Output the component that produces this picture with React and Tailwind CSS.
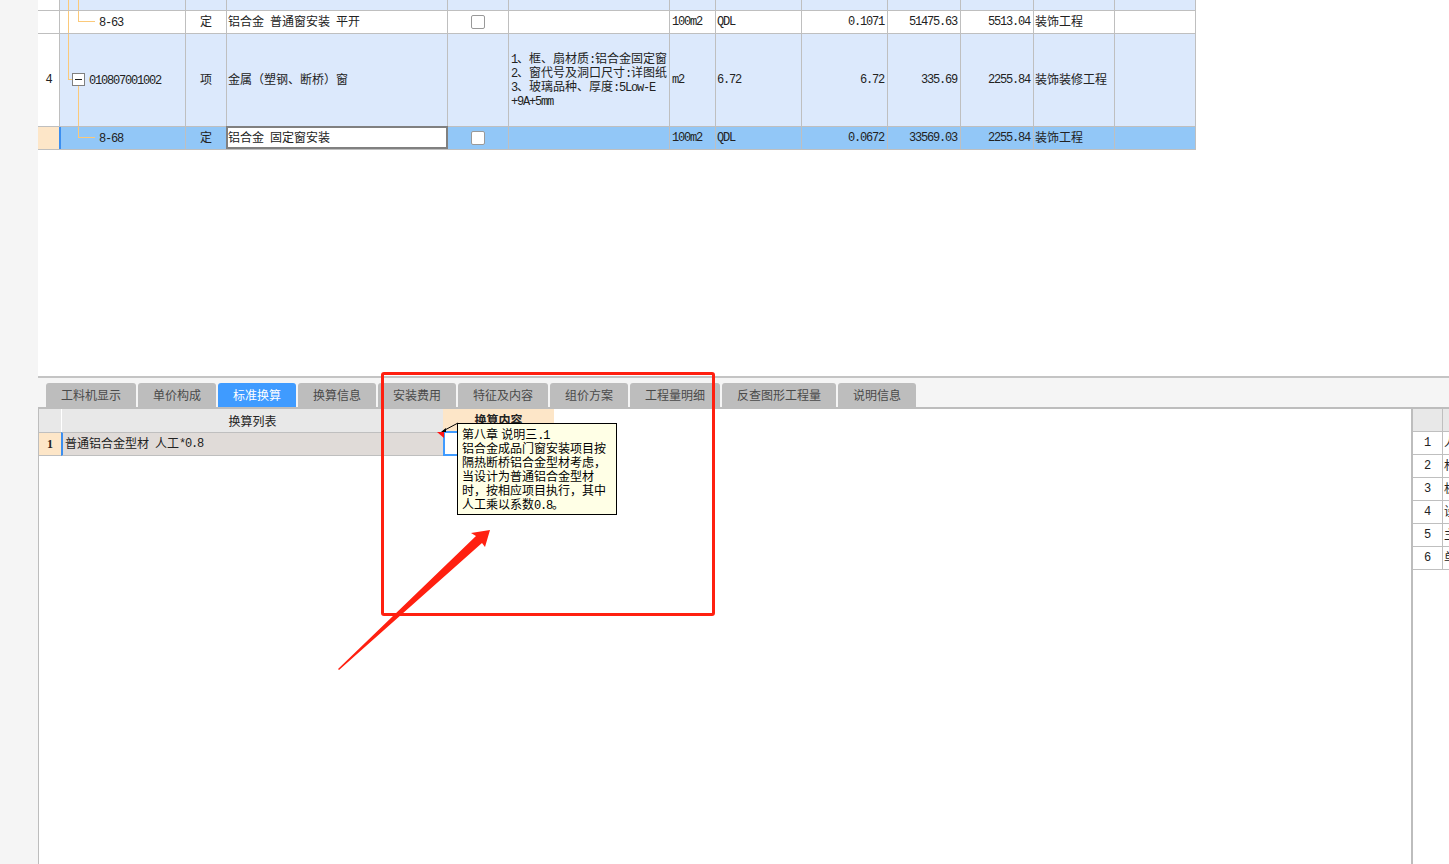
import React from "react";

const T = ({ children }) => (
  <>
    {String(children)
      .split(/([\x20-\x7e]+)/)
      .map((p, i) =>
        /^[\x20-\x7e]+$/.test(p) ? (
          <span key={i} className="font-['Liberation_Mono',monospace] text-[12px] leading-[10px] tracking-[-1.2px] whitespace-pre">
            {p}
          </span>
        ) : (
          p
        )
      )}
  </>
);

const ROW = "grid grid-cols-[22px_126px_41px_221px_61px_161px_46px_86px_86px_73px_73px_81px_81px] w-[1158px] border-b border-[#bfbfbf]";
const C = "border-r border-[#bfbfbf] flex items-center min-w-0 overflow-hidden";

const Check = () => (
  <span className="w-[14px] h-[14px] bg-white border border-[#999999] rounded-[2px] block" />
);

const DataRow = ({ bg, height, num, numBg, code, codeExtra, type, name, feature, unit, expr, qty, price, total, major, active, noCheck }) => (
  <div className={`${ROW} ${height} ${bg}`}>
    <div className={`${C} justify-center ${numBg}`}><T>{num}</T></div>
    <div className={`${C} relative ${active ? "border-l-2 border-l-[#3b8ef0] -ml-px" : ""}`}>{codeExtra}{code}</div>
    <div className={`${C} justify-center`}>{type}</div>
    {active ? (
      <div className="border-2 border-[#808080] bg-white flex items-center -mt-px -ml-px"><T>{name}</T></div>
    ) : (
      <div className={`${C} pl-px`}><T>{name}</T></div>
    )}
    <div className={`${C} justify-center`}>{noCheck ? null : <Check />}</div>
    <div className={`${C} pl-[2px] leading-[14px]`}>{feature}</div>
    <div className={`${C} pl-[2px]`}><T>{unit}</T></div>
    <div className={`${C} pl-px`}><T>{expr}</T></div>
    <div className={`${C} justify-end pr-[3px]`}><T>{qty}</T></div>
    <div className={`${C} justify-end pr-[3px]`}><T>{price}</T></div>
    <div className={`${C} justify-end pr-[3px]`}><T>{total}</T></div>
    <div className={`${C} pl-px`}>{major}</div>
    <div className={C} />
  </div>
);

const Line = ({ className }) => <span className={`absolute bg-[#fbc97a] ${className}`} />;

const tabs = [
  ["工料机显示", "w-[90px]"],
  ["单价构成", "w-[78px]"],
  ["标准换算", "w-[78px]"],
  ["换算信息", "w-[78px]"],
  ["安装费用", "w-[78px]"],
  ["特征及内容", "w-[90px]"],
  ["组价方案", "w-[78px]"],
  ["工程量明细", "w-[90px]"],
  ["反查图形工程量", "w-[114px]"],
  ["说明信息", "w-[78px]"],
];

const sideRows = ["人", "材", "机", "设", "主", "单"];

export default function App() {
  return (
    <div className="relative w-[1449px] h-[864px] overflow-hidden flex bg-white text-[12px] leading-[14px] text-[#222222] font-['Liberation_Sans','Noto_Sans_CJK_SC',sans-serif]">
      <div className="w-[38px] shrink-0 bg-[#f5f5f5]" />
      <div className="flex-1 flex flex-col min-w-0">
        <div className="h-[376px] shrink-0">
          <div className={`${ROW} h-[11px] bg-[#dce9fc]`}>
            <div className={`${C} bg-white`} />
            <div className={`${C} relative`}>
              <Line className="left-[8px] top-0 w-px h-[11px]" />
              <Line className="left-[18px] top-0 w-px h-[11px]" />
            </div>
            {Array.from({ length: 11 }).map((_, i) => (
              <div key={i} className={C} />
            ))}
          </div>
          <DataRow
            bg="bg-white"
            height="h-[23px]"
            num=""
            numBg="bg-white"
            code={<span className="ml-[39px]"><T>8-63</T></span>}
            codeExtra={
              <>
                <Line className="left-[8px] top-0 w-px h-[23px]" />
                <Line className="left-[18px] top-0 w-px h-[10px]" />
                <Line className="left-[18px] top-[10px] w-[17px] h-px" />
              </>
            }
            type="定"
            name="铝合金 普通窗安装 平开"
            unit="100m2"
            expr="QDL"
            qty="0.1071"
            price="51475.63"
            total="5513.04"
            major="装饰工程"
          />
          <DataRow
            bg="bg-[#dce9fc]"
            height="h-[93px]"
            num="4"
            numBg="bg-white"
            noCheck
            code={<span className="ml-[29px]"><T>010807001002</T></span>}
            codeExtra={
              <>
                <Line className="left-[8px] top-0 w-px h-[46px]" />
                <Line className="left-[8px] top-[45px] w-[5px] h-px" />
                <Line className="left-[18px] top-[51px] w-px h-[42px]" />
                <span className="absolute left-[12px] top-[39px] w-[13px] h-[13px] border border-[#808080] bg-white flex items-center justify-center">
                  <span className="w-[7px] h-px bg-[#222222]" />
                </span>
              </>
            }
            type="项"
            name="金属（塑钢、断桥）窗"
            feature={
              <div>
                <div><T>1</T>、框、扇材质<T>:</T>铝合金固定窗</div>
                <div><T>2</T>、窗代号及洞口尺寸<T>:</T>详图纸</div>
                <div><T>3</T>、玻璃品种、厚度<T>:5Low-E</T></div>
                <div><T>+9A+5mm</T></div>
              </div>
            }
            unit="m2"
            expr="6.72"
            qty="6.72"
            price="335.69"
            total="2255.84"
            major="装饰装修工程"
          />
          <DataRow
            bg="bg-[#92c7f7]"
            height="h-[23px]"
            num=""
            numBg="bg-[#fde6c8]"
            active
            code={<span className="ml-[38px]"><T>8-68</T></span>}
            codeExtra={
              <>
                <Line className="left-[17px] top-0 w-px h-[10px]" />
                <Line className="left-[17px] top-[10px] w-[17px] h-px" />
              </>
            }
            type="定"
            name="铝合金 固定窗安装"
            unit="100m2"
            expr="QDL"
            qty="0.0672"
            price="33569.03"
            total="2255.84"
            major="装饰工程"
          />
        </div>

        <div className="h-[2px] shrink-0 bg-[#c4c4c4]" />

        <div className="h-[31px] shrink-0 bg-[#f5f5f5] border-b-2 border-[#bdbdbd] flex items-start pt-[5px] pl-[8px] gap-[2px]">
          {tabs.map(([label, w]) => (
            <div
              key={label}
              className={`${w} h-[24px] pt-px rounded-t-[3px] flex items-center justify-center ${
                label === "标准换算" ? "bg-[#3f9bff] text-white" : "bg-[#bdbdbd] text-[#4a4a4a]"
              }`}
            >
              {label}
            </div>
          ))}
        </div>

        <div className="flex-1 flex min-h-0 border-l border-[#bdbdbd]">
          <div className="flex-1 min-w-0">
            <div className="flex h-[23px]">
              <div className="w-[23px] bg-[#e8e8e8] border-r border-white" />
              <div className="w-[381px] bg-[#e8e8e8] flex items-center justify-center pt-[2px]">换算列表</div>
              <div className="w-[111px] bg-[#fde6c8] flex items-center justify-center font-bold pt-px">换算内容</div>
            </div>
            <div className="flex h-[24px]">
              <div className="w-[22px] bg-[#fde6c8] border-y border-[#bfbfbf] flex items-center justify-center font-['Liberation_Serif',serif] font-bold">1</div>
              <div className="w-[382px] bg-[#e0dbd8] border-y border-[#bfbfbf] border-l-2 border-l-[#3b8ef0] flex items-center pl-[2px]">
                <T>普通铝合金型材 人工*0.8</T>
              </div>
              <div className="w-[111px] h-[25px] -mt-px bg-white border-2 border-[#3f9bff]" />
            </div>
          </div>

          <div className="w-[38px] shrink-0 border-l-2 border-[#bdbdbd] overflow-hidden">
            <div className="flex h-[23px] border-b border-[#bfbfbf]">
              <div className="w-[30px] shrink-0 bg-[#e8e8e8] border-r border-[#bfbfbf]" />
              <div className="flex-1 bg-[#e8e8e8]" />
            </div>
            {sideRows.map((s, i) => (
              <div key={s} className="flex h-[23px] border-b border-[#bfbfbf]">
                <div className="w-[30px] shrink-0 border-r border-[#bfbfbf] flex items-center justify-center pr-px">
                  <T>{i + 1}</T>
                </div>
                <div className="flex-1 pl-px flex items-center whitespace-nowrap overflow-hidden">{s}</div>
              </div>
            ))}
          </div>
        </div>
      </div>

      {/* cell comment marker and leader */}
      <svg className="absolute left-[430px] top-[418px]" width="40" height="24" viewBox="0 0 40 24">
        <polygon points="7,14 14,14 14,20" fill="#ff1414" />
        <polygon points="11,14 16,10 16,14" fill="#000000" />
        <line x1="13" y1="13" x2="28" y2="5" stroke="#000000" />
      </svg>

      {/* comment tooltip */}
      <div className="absolute left-[457px] top-[423px] w-[160px] h-[92px] bg-[#ffffe6] border border-black text-black pl-[4px] pt-[4px]">
        <div><span>第八章 说明三</span><T>.1</T></div>
        <div>铝合金成品门窗安装项目按</div>
        <div>隔热断桥铝合金型材考虑，</div>
        <div>当设计为普通铝合金型材</div>
        <div>时，按相应项目执行，其中</div>
        <div>人工乘以系数<T>0.8</T>。</div>
      </div>

      {/* red annotation */}
      <div className="absolute left-[381px] top-[372px] w-[334px] h-[244px] border-[3px] border-[#ff2010] rounded-[3px]" />
      <svg className="absolute left-[330px] top-[520px]" width="170" height="160" viewBox="330 520 170 160">
        <polygon points="338,669 476,536 471,533 490,530 485,547 482,543 339,670" fill="#ff2010" />
      </svg>
    </div>
  );
}
